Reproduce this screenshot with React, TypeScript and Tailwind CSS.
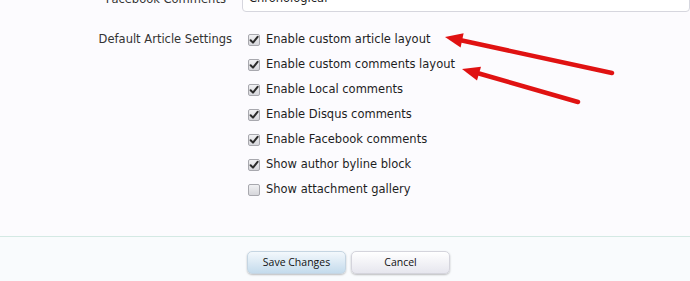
import React from "react";

const items: { label: string; checked: boolean }[] = [
  { label: "Enable custom article layout", checked: true },
  { label: "Enable custom comments layout", checked: true },
  { label: "Enable Local comments", checked: true },
  { label: "Enable Disqus comments", checked: true },
  { label: "Enable Facebook comments", checked: true },
  { label: "Show author byline block", checked: true },
  { label: "Show attachment gallery", checked: false },
];

function Box({ checked }: { checked: boolean }) {
  return (
    <span className="ml-[1px] flex h-[12px] w-[12px] shrink-0 items-center justify-center rounded-[2px] border border-[#a8a8ae] bg-linear-to-b from-[#f1f1f3] to-[#d6d6db]">
      {checked && (
        <svg width="10" height="10" viewBox="0 0 10 10">
          <path d="M1.6 5.2 L4 7.6 L8.6 1.8" fill="none" stroke="#2b2b2b" strokeWidth="2" strokeLinecap="round" strokeLinejoin="round" />
        </svg>
      )}
    </span>
  );
}

export default function App() {
  return (
    <div className="relative h-[281px] w-[690px] overflow-hidden bg-[#fcfbfe] font-['DejaVu_Sans',sans-serif] text-[11.5px] text-[#1e1e1e]">
      <div className="-mt-[14px] flex">
        <div className="w-[232px] text-right leading-[26px] text-[#333]">Facebook Comments</div>
        <div className="ml-[16px] flex h-[26px] w-[460px] items-center rounded-[4px] border border-[#d6d6de] bg-white pl-[6px]">
          Chronological
        </div>
      </div>

      <div className="mt-[15px] flex">
        <div className="w-[232px] text-right leading-[24px] text-[#333]">Default Article Settings</div>
        <div className="ml-[15px] flex flex-col">
          {items.map((it) => (
            <div key={it.label} className="flex h-[25px] items-center gap-[6px]">
              <Box checked={it.checked} />
              <span>{it.label}</span>
            </div>
          ))}
        </div>
      </div>

      <div className="mt-[34px] border-t border-[#d4e9e4] bg-[#f9fbfd] pt-[14px] pb-[20px]">
        <div className="ml-[247px] flex gap-[5px] font-['Open_Sans',sans-serif] text-[10.5px] text-[#111]">
          <button className="flex h-[23px] w-[99px] items-center justify-center rounded-[5px] border border-[#c5d5e2] bg-linear-to-b from-[#f3f8fc] to-[#c4dbec] shadow-[0_1px_2px_rgba(0,0,0,0.25)]">
            Save Changes
          </button>
          <button className="flex h-[23px] w-[99px] items-center justify-center rounded-[5px] border border-[#d4d4dc] bg-linear-to-b from-[#ffffff] to-[#e6e6ee] shadow-[0_1px_2px_rgba(0,0,0,0.25)]">
            Cancel
          </button>
        </div>
      </div>

      <svg className="pointer-events-none absolute inset-0" width="690" height="281" viewBox="0 0 690 281">
        <line x1="612" y1="73" x2="462" y2="40.5" stroke="#e01212" strokeWidth="4.5" strokeLinecap="round" />
        <polygon points="445,37 463.6,33.2 460.6,47.4" fill="#e01212" />
        <line x1="578" y1="102" x2="479" y2="73.5" stroke="#e01212" strokeWidth="4.5" strokeLinecap="round" />
        <polygon points="462,69 481,66.7 477,80.5" fill="#e01212" />
      </svg>
    </div>
  );
}
